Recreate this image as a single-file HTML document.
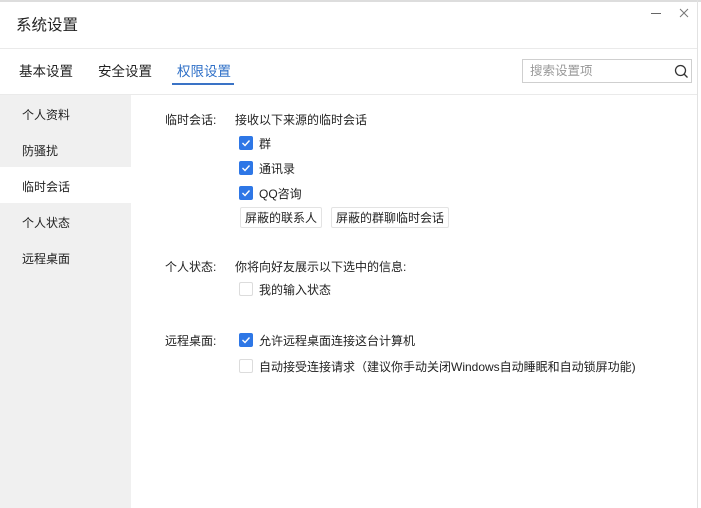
<!DOCTYPE html>
<html><head><meta charset="utf-8"><style>
*{margin:0;padding:0;box-sizing:border-box}
body{width:701px;height:508px;overflow:hidden;background:#fff;font-family:"Liberation Sans","Noto Sans CJK SC",sans-serif;color:#222;position:relative}
.abs{position:absolute;white-space:nowrap;line-height:1.2}
.cb{position:absolute;width:14px;height:14px;border-radius:2px;background:#2e77e6}
.cb svg{position:absolute;left:0;top:0}
.ucb{position:absolute;width:14px;height:14px;border:1px solid #dcdcdc;border-radius:2px;background:#fff}
.t{font-size:12px;margin-top:2px}
.btn{position:absolute;height:21px;border:1px solid #e3e3e3;border-radius:2px;font-size:12px;line-height:20px;padding:0 4px;background:#fff}
</style></head><body>
<div class="abs" style="left:0;top:0;width:701px;height:2px;background:#ddd"></div>
<div class="abs" style="left:697px;top:0;width:1px;height:508px;background:#e2e2e2"></div>
<div class="abs" style="left:16px;top:17px;font-size:15.5px">系统设置</div>
<div class="abs" style="left:651px;top:13px;width:10px;height:1px;background:#666"></div>
<svg class="abs" style="left:679px;top:8px" width="10" height="10"><path d="M1 1l8 8M9 1l-8 8" stroke="#777" stroke-width="1"/></svg>
<div class="abs" style="left:0;top:48px;width:697px;height:1px;background:#eaeaea"></div>
<div class="abs" style="left:19px;top:64px;font-size:13.5px">基本设置</div>
<div class="abs" style="left:98px;top:64px;font-size:13.5px">安全设置</div>
<div class="abs" style="left:177px;top:64px;font-size:13.5px;color:#2e6fc7">权限设置</div>
<div class="abs" style="left:172px;top:83px;width:62px;height:2px;background:#3a73c6"></div>
<div class="abs" style="left:522px;top:59px;width:170px;height:24px;border:1px solid #cfcfcf;background:#fff"></div>
<div class="abs" style="left:530px;top:64px;font-size:12.5px;color:#999">搜索设置项</div>
<svg class="abs" style="left:674px;top:64px" width="15" height="15" viewBox="0 0 15 15"><circle cx="6.5" cy="6.5" r="5" fill="none" stroke="#333" stroke-width="1.3"/><path d="M10 10l3.5 3.5" stroke="#333" stroke-width="1.3"/></svg>
<div class="abs" style="left:0;top:94px;width:697px;height:1px;background:#eaeaea"></div>
<div class="abs" style="left:0;top:95px;width:131px;height:413px;background:#f0f0f0"></div>
<div class="abs" style="left:0;top:167px;width:131px;height:36px;background:#fff"></div>
<div class="abs t" style="left:22px;top:106px">个人资料</div>
<div class="abs t" style="left:22px;top:142px">防骚扰</div>
<div class="abs t" style="left:22px;top:178px">临时会话</div>
<div class="abs t" style="left:22px;top:214px">个人状态</div>
<div class="abs t" style="left:22px;top:250px">远程桌面</div>

<div class="abs t" style="left:165px;top:111px">临时会话:</div>
<div class="abs t" style="left:235px;top:111px">接收以下来源的临时会话</div>
<div class="cb" style="left:239px;top:136px"><svg width="14" height="14"><path d="M3.5 7l2.5 2.5 4.5-5" fill="none" stroke="#fff" stroke-width="1.4"/></svg></div>
<div class="abs t" style="left:259px;top:135px">群</div>
<div class="cb" style="left:239px;top:161px"><svg width="14" height="14"><path d="M3.5 7l2.5 2.5 4.5-5" fill="none" stroke="#fff" stroke-width="1.4"/></svg></div>
<div class="abs t" style="left:259px;top:160px">通讯录</div>
<div class="cb" style="left:239px;top:186px"><svg width="14" height="14"><path d="M3.5 7l2.5 2.5 4.5-5" fill="none" stroke="#fff" stroke-width="1.4"/></svg></div>
<div class="abs t" style="left:259px;top:185px">QQ咨询</div>
<div class="btn" style="left:240px;top:207px">屏蔽的联系人</div>
<div class="btn" style="left:331px;top:207px">屏蔽的群聊临时会话</div>

<div class="abs t" style="left:165px;top:258px">个人状态:</div>
<div class="abs t" style="left:235px;top:258px">你将向好友展示以下选中的信息:</div>
<div class="ucb" style="left:239px;top:282px"></div>
<div class="abs t" style="left:259px;top:281px">我的输入状态</div>

<div class="abs t" style="left:165px;top:332px">远程桌面:</div>
<div class="cb" style="left:239px;top:333px"><svg width="14" height="14"><path d="M3.5 7l2.5 2.5 4.5-5" fill="none" stroke="#fff" stroke-width="1.4"/></svg></div>
<div class="abs t" style="left:259px;top:332px">允许远程桌面连接这台计算机</div>
<div class="ucb" style="left:239px;top:359px"></div>
<div class="abs t" style="left:259px;top:358px">自动接受连接请求（建议你手动关闭Windows自动睡眠和自动锁屏功能)</div>
</body></html>
